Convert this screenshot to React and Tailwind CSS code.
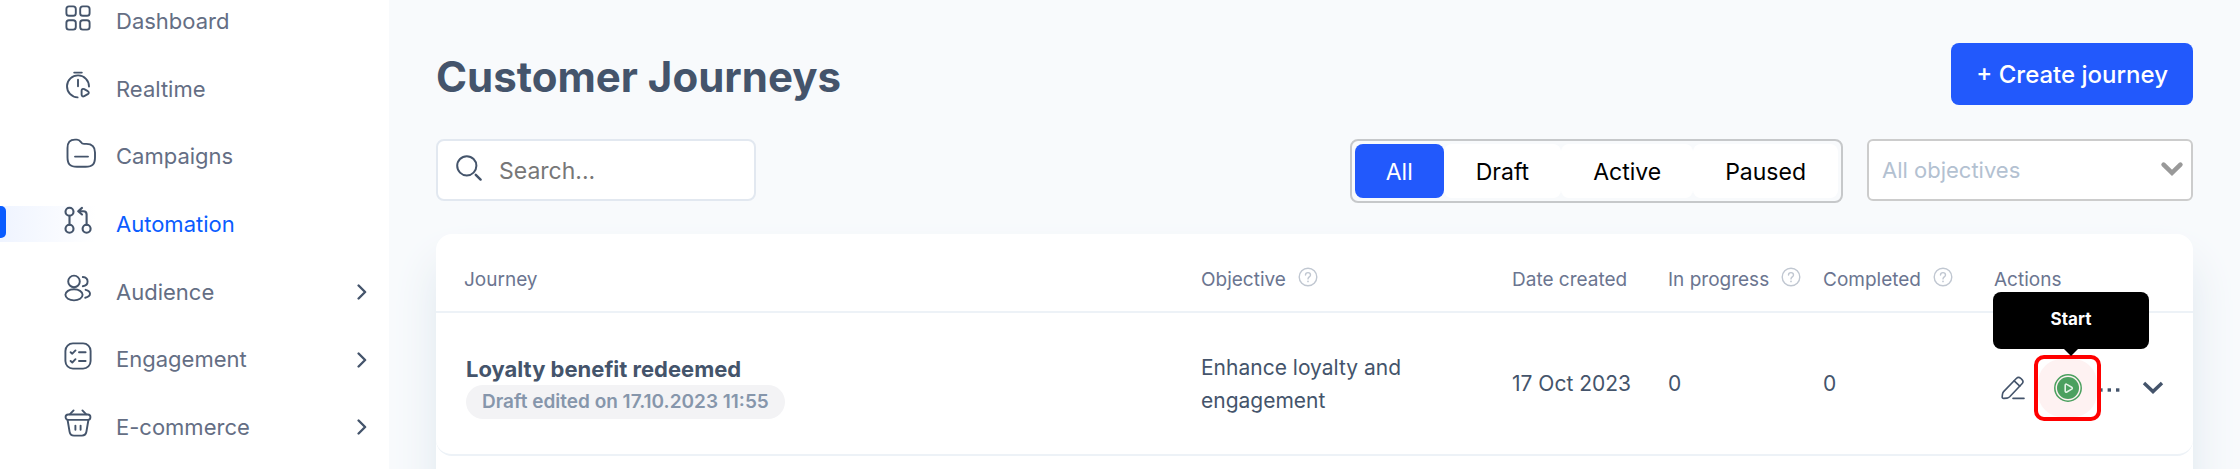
import { useState } from 'react';

const stroke = {
  fill: 'none',
  stroke: 'currentColor',
  strokeWidth: 1.9,
  strokeLinecap: 'round',
  strokeLinejoin: 'round',
};

function DashboardIcon() {
  return (
    <svg viewBox="0 0 28 28" className="size-7" {...stroke} aria-hidden="true">
      <rect x="2.4" y="2.4" width="9.4" height="9.4" rx="2.6" />
      <rect x="16.2" y="2.4" width="9.4" height="9.4" rx="2.6" />
      <rect x="2.4" y="16.2" width="9.4" height="9.4" rx="2.6" />
      <rect x="16.2" y="16.2" width="9.4" height="9.4" rx="2.6" />
    </svg>
  );
}

function RealtimeIcon() {
  return (
    <svg viewBox="0 0 28 28" className="size-7" {...stroke} aria-hidden="true">
      <path d="M10.2 1.6h7.6" />
      <path d="M14 8.8v6.4" />
      <path d="M13.6 26.4A11 11 0 1 1 25 15.6" />
      <path d="M17.6 20.4v3.2c0 1.7 1.2 2.3 2.6 1.5l3.6-2c1.3-.8 1.3-2.1 0-2.9l-3.6-2c-1.4-.7-2.6 0-2.6 1.5z" />
    </svg>
  );
}

function CampaignsIcon() {
  return (
    <svg viewBox="0 0 32 32" className="size-8" {...stroke} aria-hidden="true">
      <path d="M3.5 11c0-6 2.5-8.4 7.5-8.4h2c2 0 2.8.9 3.8 2.3.9 1.4 1.7 2 3.2 2h2.4c5.8 0 8.6 2.7 8.6 8.6v4.8c0 7-2.5 9.5-9.5 9.5h-8.500c-7 0-9.500-2.500-9.500-9.500z" />
      <path d="M11 19.6h13" />
    </svg>
  );
}

function AutomationIcon() {
  return (
    <svg viewBox="0 0 28 28" className="size-7" {...stroke} strokeWidth={2.1} aria-hidden="true">
      <circle cx="5.5" cy="5.8" r="4" />
      <circle cx="5.5" cy="22.8" r="4" />
      <circle cx="22.6" cy="22.8" r="4" />
      <path d="M5.5 9.8v9M22.6 18.8V8.5c0-2-1.2-3.2-3.2-3.2h-4.8M18 1.9l-3.8 3.4L18 8.5" />
    </svg>
  );
}

function AudienceIcon() {
  return (
    <svg viewBox="0 0 28 28" className="size-7" {...stroke} aria-hidden="true">
      <circle cx="10" cy="7.4" r="5.8" />
      <ellipse cx="10" cy="20.8" rx="8.6" ry="5.6" />
      <path d="M18.8 3c3 .3 4.8 2 4.8 4.5s-1.8 4.4-4.8 4.7" />
      <path d="M21.6 15.8c2.8.7 4.4 2 4.4 4 0 1.9-1.6 3.2-4.8 3.9" />
    </svg>
  );
}

function EngagementIcon() {
  return (
    <svg viewBox="0 0 28 28" className="size-7" {...stroke} aria-hidden="true">
      <rect x="1.4" y="1.4" width="25.2" height="25.2" rx="7.5" />
      <path d="M6.6 10.2l1.7 1.5 3.2-3.3M6.6 19l1.7 1.5 3.2-3.3M15 10.2h6.6M15 19h6.6" />
    </svg>
  );
}

function EcommerceIcon() {
  return (
    <svg viewBox="0 0 28 28" className="size-7" {...stroke} aria-hidden="true">
      <path d="M9.6 1.4L6 5.2M18.4 1.4L22 5.2" />
      <rect x="1.6" y="5.5" width="24.8" height="5.4" rx="2.6" />
      <path d="M3.6 11l2 11.8c.5 2.6 1.6 3.8 4.4 3.8h8c2.8 0 3.9-1.2 4.4-3.8L24.4 11" />
      <path d="M11.4 16.6v4.2M16.6 16.6v4.2" />
    </svg>
  );
}

function ChevronRight() {
  return (
    <svg viewBox="0 0 10 18" className="h-[18px] w-[10px]" {...stroke} strokeWidth={2.4} aria-hidden="true">
      <path d="M1.6 2.500l6.500 6.500-6.500 6.500" />
    </svg>
  );
}

function HelpIcon() {
  return (
    <svg viewBox="0 0 20 20" className="-mt-2 size-5 text-[#c0c7d1]" {...stroke} strokeWidth={1.4} aria-hidden="true">
      <circle cx="10" cy="10" r="8.8" />
      <path d="M7.5 8.1c0-1.5 1.1-2.5 2.5-2.5s2.5 1 2.5 2.3c0 2-2.5 2-2.5 4" />
      <path d="M10 14.4v.1" strokeWidth="1.7" />
    </svg>
  );
}

const navItems = [
  { label: 'Dashboard', Icon: DashboardIcon },
  { label: 'Realtime', Icon: RealtimeIcon },
  { label: 'Campaigns', Icon: CampaignsIcon },
  { label: 'Automation', Icon: AutomationIcon, active: true },
  { label: 'Audience', Icon: AudienceIcon, expandable: true },
  { label: 'Engagement', Icon: EngagementIcon, expandable: true },
  { label: 'E-commerce', Icon: EcommerceIcon, expandable: true },
];

function Sidebar() {
  return (
    <nav className="w-[389px] shrink-0 overflow-hidden bg-white">
      <ul className="-mt-3 grid min-h-[473px] auto-rows-fr">
        {navItems.map(({ label, Icon, active, expandable }) => (
          <li key={label} className="flex">
            <a href="#" className="relative flex flex-1 items-center pr-[22px] pl-16" aria-current={active ? 'page' : undefined}>
              {active && (
                <span className="absolute top-1/2 left-0 h-9 w-24 -translate-y-1/2 bg-linear-to-r from-[#eff4ff] to-white">
                  <span className="block h-8 w-[6px] rounded-r-[5px] bg-[#0a5cff]" />
                </span>
              )}
              <span className="relative -mt-2 w-8 text-[#44546b]">
                <Icon />
              </span>
              <span className={active ? 'ml-5 text-[22px] text-[#0a5cff]' : 'ml-5 text-[22px] text-[#646e84]'}>{label}</span>
              {expandable && (
                <span className="ml-auto text-[#44546b]">
                  <ChevronRight />
                </span>
              )}
            </a>
          </li>
        ))}
      </ul>
    </nav>
  );
}

function Toolbar() {
  const [tab, setTab] = useState('All');
  return (
    <div className="mt-[34px] flex items-start">
      <label className="flex h-[62px] w-80 items-center gap-[17px] rounded-lg border-2 border-[#e2e8f0] bg-white pl-[18px]">
        <svg viewBox="0 0 26 26" className="-mt-1 size-[26px] shrink-0 text-[#44546b]" {...stroke} strokeWidth={2} aria-hidden="true">
          <circle cx="10.8" cy="10.8" r="9.6" />
          <path d="M19.8 19.8l4.8 4.8" strokeWidth="2.4" />
        </svg>
        <input type="search" aria-label="Search" placeholder="Search..." className="w-full min-w-0 bg-transparent pt-[2px] text-[23px] outline-none placeholder:text-[#777777]" />
      </label>

      <div role="group" aria-label="Status" className="ml-auto flex h-16 rounded-lg border-2 border-[#c6c8ca] bg-[#f8fafc] p-[3px]">
        {['All', 'Draft', 'Active', 'Paused'].map((name) => (
          <button
            key={name}
            type="button"
            aria-pressed={tab === name}
            onClick={() => setTab(name)}
            className={
              tab === name
                ? 'rounded-lg bg-[#2259fc] px-[31px] pt-[2px] text-[23px] text-white'
                : 'rounded-lg bg-white px-8 pt-[2px] text-[23px] text-black'
            }
          >
            {name}
          </button>
        ))}
      </div>

      <div className="relative ml-6 w-[326px]">
        <select aria-label="Objectives" className="h-[62px] w-full appearance-none rounded-md border-2 border-[#cccccc] bg-white pr-12 pl-[13px] text-[22px] text-[#b3c1d1]">
          <option>All objectives</option>
        </select>
        <svg viewBox="0 0 24 18" className="pointer-events-none absolute top-[22px] right-[9px] h-[18px] w-6 text-[#999999]" {...stroke} strokeWidth={4.6} strokeLinejoin="miter" aria-hidden="true">
          <path d="M3.6 3.6L12 11.8l8.4-8.2" />
        </svg>
      </div>
    </div>
  );
}

function RowActions() {
  return (
    <div className="flex items-center pt-2 pl-[7px] text-[#44546b]">
      <button type="button" aria-label="Edit" className="mr-[9px]">
        <svg viewBox="0 0 24 24" className="size-6" {...stroke} strokeWidth={1.6} aria-hidden="true">
          <path d="M2.6 15.6L15.3 2.5c1.4-1.4 3-1.4 4.400-.2l1.300 1.300c1.300 1.300 1.300 2.800 0 4.200L8.700 20.800c-.8.8-1.500 1.200-2.600 1.300l-3.200.3c-1.200.1-1.800-.5-1.700-1.700l.3-2.600c.1-1 .4-1.700 1.100-2.500z" />
          <path d="M13.200 4.800l5.600 5.400M12 22.400h11" />
        </svg>
      </button>
      <div className="relative">
        <button type="button" aria-label="Start" aria-describedby="start-tip" className="flex h-[66px] w-[67px] items-center justify-center rounded-[10px] border-4 border-[#ff0000] bg-white">
          <span className="flex size-full items-center justify-center rounded-3xl bg-[#fef2f2]">
            <svg viewBox="0 0 28 28" className="size-7" aria-hidden="true">
              <circle cx="14" cy="14" r="13.2" fill="#fef2f2" stroke="#4ba05f" strokeWidth="1.5" />
              <circle cx="14" cy="14" r="11" fill="#4ba05f" />
              <path d="M11.2 11.3v5.8c0 1 .8 1.4 1.6.9l4.9-2.9c.8-.5.8-1.3 0-1.8l-4.9-2.9c-.8-.5-1.6-.1-1.6.9z" fill="none" stroke="#e3f2e6" strokeWidth="1.6" strokeLinejoin="round" />
            </svg>
          </span>
        </button>
        <div id="start-tip" role="tooltip" className="absolute -right-12 bottom-[72px] flex h-[57px] w-[156px] items-center justify-center rounded-lg bg-black text-[17px] font-bold text-white">
          Start
          <svg viewBox="0 0 16 8" className="absolute top-full left-1/2 h-[7px] w-4 -translate-x-1/2 text-black" aria-hidden="true">
            <path d="M0 0h16L8 8z" fill="currentColor" />
          </svg>
        </div>
      </div>
      <button type="button" aria-label="More">
        <svg viewBox="0 0 20 20" className="mt-1 size-5" fill="currentColor" aria-hidden="true">
          <rect x="0" y="8.3" width="1.6" height="3.4" />
          <rect x="6.6" y="8.3" width="3.4" height="3.4" />
          <rect x="15" y="8.3" width="3.4" height="3.4" />
        </svg>
      </button>
      <button type="button" aria-label="Expand row" className="ml-[21px]">
        <svg viewBox="0 0 22 16" className="h-4 w-[22px]" {...stroke} strokeWidth={3.4} strokeLinecap="butt" strokeLinejoin="miter" aria-hidden="true">
          <path d="M2 3l9 8.6L20 3" />
        </svg>
      </button>
    </div>
  );
}

function Heading({ children, help }) {
  return (
    <span className="flex items-center gap-3 whitespace-nowrap">
      {children}
      {help && <HelpIcon />}
    </span>
  );
}

function JourneyTable() {
  return (
    <div className="mt-[31px] flex-1 rounded-2xl bg-white pb-14 shadow-[0_30px_44px_#dfe8ef]">
      <table className="w-full table-fixed border-separate border-spacing-0 text-left text-[21px] text-[#44546b]">
        <thead className="text-[19px] text-[#6b7590]">
          <tr className="h-[79px] [&>th]:border-b-2 [&>th]:border-[#edf2f7] [&>th]:p-0 [&>th]:pt-4 [&>th]:font-normal">
            <th scope="col" className="w-auto"><div className="pl-7">Journey</div></th>
            <th scope="col" className="w-[311px]"><Heading help>Objective</Heading></th>
            <th scope="col" className="w-[156px]"><Heading>Date created</Heading></th>
            <th scope="col" className="w-[155px]"><Heading help>In progress</Heading></th>
            <th scope="col" className="w-[171px]"><Heading help>Completed</Heading></th>
            <th scope="col" className="w-[199px]"><Heading>Actions</Heading></th>
          </tr>
        </thead>
        <tbody>
          <tr className="h-[143px] [&>td]:border-b-2 [&>td]:border-[#edf2f7] [&>td]:p-0">
            <td className="rounded-bl-2xl">
              <div className="flex flex-col items-start pt-1 pl-[30px]">
                <a href="#" className="text-[22px] leading-8 font-bold">Loyalty benefit redeemed</a>
                <span className="rounded-full bg-[#f3f3f5] px-4 text-[19px] leading-[34px] font-semibold text-[#8696ab]">Draft edited on 17.10.2023 11:55</span>
              </div>
            </td>
            <td className="leading-[33px]"><div className="w-60">Enhance loyalty and engagement</div></td>
            <td>17 Oct 2023</td>
            <td>0</td>
            <td>0</td>
            <td className="rounded-br-2xl"><RowActions /></td>
          </tr>
        </tbody>
      </table>
    </div>
  );
}

export default function App() {
  return (
    <div className="flex h-screen overflow-hidden bg-[#f8fafc] font-['Inter','Noto_Sans',sans-serif]">
      <Sidebar />
      <main className="flex min-w-0 flex-1 flex-col px-[47px] pt-[43px]">
        <header className="flex h-[62px] items-center justify-between">
          <h1 className="pt-[6px] text-[42px] leading-[62px] font-bold text-[#44546b]">Customer Journeys</h1>
          <button type="button" className="h-[62px] rounded-lg bg-[#2259fc] px-[25px] pt-[2px] text-[24px] font-medium text-white">+ Create journey</button>
        </header>
        <Toolbar />
        <JourneyTable />
      </main>
    </div>
  );
}
